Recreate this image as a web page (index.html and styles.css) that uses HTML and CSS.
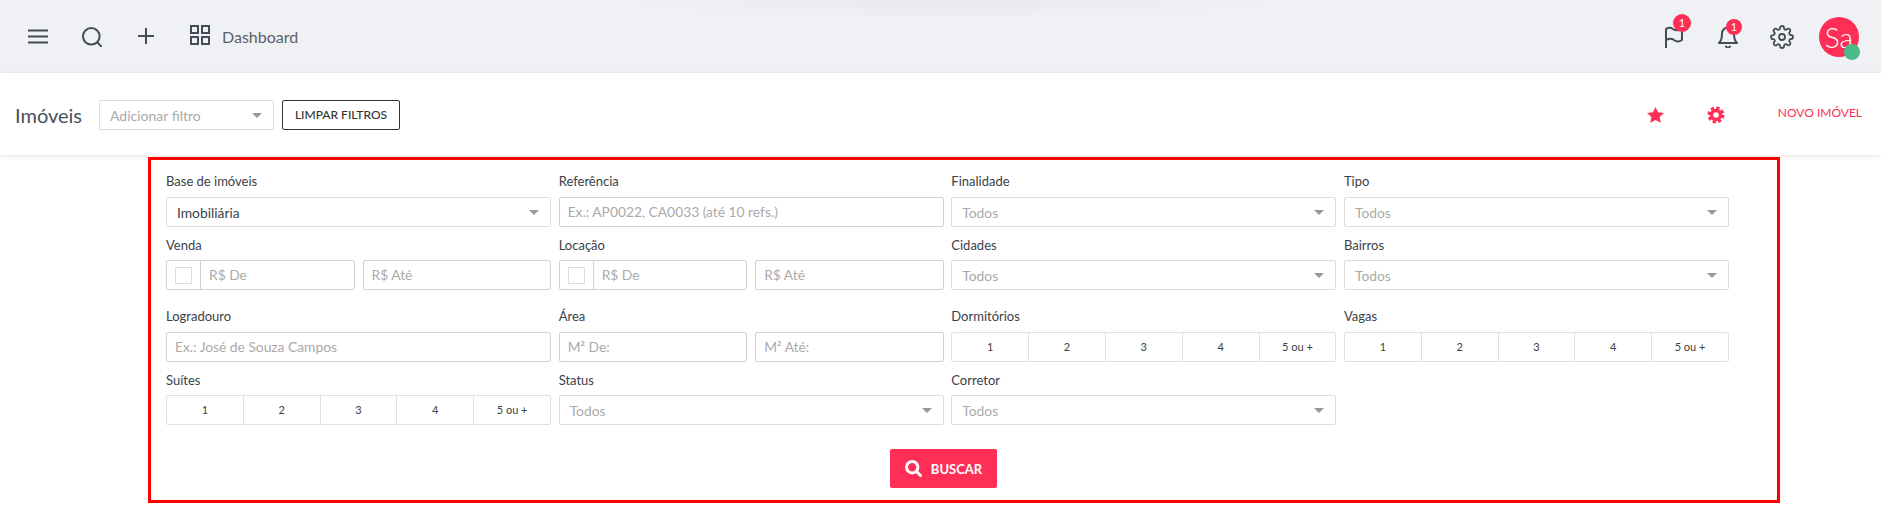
FILE: index.html
```html
<!DOCTYPE html>
<html lang="pt-BR">
<head>
<meta charset="utf-8">
<title>Imóveis</title>
<link rel="stylesheet" href="styles.css">
</head>
<body>
<header class="topbar">
  <svg class="ic ic-menu" viewBox="0 0 20 15"><path d="M0 1.5h20M0 7.5h20M0 13.5h20"/></svg>
  <svg class="ic ic-search" viewBox="0 0 20 20"><circle cx="9.3" cy="9.3" r="8.3"/><path d="M15.4 15.4 19.4 19.6"/></svg>
  <svg class="ic ic-plus" viewBox="0 0 16 16"><path d="M8 0v16M0 8h16"/></svg>
  <svg class="ic ic-grid" viewBox="0 0 20 20"><rect x="1" y="1" width="7" height="7"/><rect x="12" y="1" width="7" height="7"/><rect x="1" y="12" width="7" height="7"/><rect x="12" y="12" width="7" height="7"/></svg>
  <span class="crumb">Dashboard</span>
  <div class="top-right">
    <div class="notif notif-flag">
      <svg class="ic ic-flag" viewBox="0 0 18 22"><path d="M1 22V3c3-2 5-1.500 7 0s5 2 9 0v11c-3 2-6 1.500-8 0s-5-1.500-8 0"/></svg>
      <span class="badge badge-lg">1</span>
    </div>
    <div class="notif notif-bell">
      <svg class="ic ic-bell" viewBox="0 0 20 22"><path d="M16 7.500a6 6 0 0 0-12 0c0 7-3 9.500-3 9.500h18s-3-2.500-3-9.500M8 20.500a2.300 2.300 0 0 0 4 0"/></svg>
      <span class="badge badge-sm">1</span>
    </div>
    <svg class="ic ic-gear" viewBox="0 0 24 24"><circle cx="12" cy="12" r="3"/><path d="M19.400 15a1.650 1.650 0 0 0 .33 1.820l.06.06a2 2 0 1 1-2.830 2.830l-.06-.06a1.650 1.650 0 0 0-1.820-.33 1.650 1.650 0 0 0-1 1.510V21a2 2 0 1 1-4 0v-.09A1.650 1.650 0 0 0 9 19.400a1.650 1.650 0 0 0-1.820.33l-.06.06a2 2 0 1 1-2.830-2.830l.06-.06a1.650 1.650 0 0 0 .33-1.820 1.650 1.650 0 0 0-1.510-1H3a2 2 0 1 1 0-4h.09A1.650 1.650 0 0 0 4.600 9a1.650 1.650 0 0 0-.33-1.820l-.06-.06a2 2 0 1 1 2.830-2.830l.06.06a1.650 1.650 0 0 0 1.820.33H9a1.650 1.650 0 0 0 1-1.510V3a2 2 0 1 1 4 0v.09a1.650 1.650 0 0 0 1 1.510 1.650 1.650 0 0 0 1.820-.33l.06-.06a2 2 0 1 1 2.830 2.830l-.06.06a1.650 1.650 0 0 0-.33 1.820V9a1.650 1.650 0 0 0 1.510 1H21a2 2 0 1 1 0 4h-.09a1.650 1.650 0 0 0-1.510 1z"/></svg>
    <div class="avatar">Sa<span class="online"></span></div>
  </div>
</header>

<section class="subbar">
  <h1 class="title">Imóveis</h1>
  <div class="select select-filter"><span class="muted">Adicionar filtro</span></div>
  <button class="btn-outline" type="button">LIMPAR FILTROS</button>
  <div class="sub-right">
    <svg class="ic-star" viewBox="0 0 18 17"><path d="M9 0l2.700 5.600 6.300.8-4.600 4.300 1.200 6.100L9 13.800l-5.600 3 1.200-6.100L0 6.400l6.300-.8z"/></svg>
    <svg class="ic-cog" viewBox="0 0 18 18"><circle class="cog-teeth" cx="9" cy="9" r="7"/><circle class="cog-ring" cx="9" cy="9" r="4.500"/></svg>
    <a class="new-link" href="#">NOVO IMÓVEL</a>
  </div>
</section>

<form class="panel">
  <div class="row">
    <div class="field"><label>Base de imóveis</label><div class="select"><span>Imobiliária</span></div></div>
    <div class="field"><label>Referência</label><input class="input" placeholder="Ex.: AP0022, CA0033 (até 10 refs.)"></div>
    <div class="field"><label>Finalidade</label><div class="select"><span class="muted">Todos</span></div></div>
    <div class="field"><label>Tipo</label><div class="select"><span class="muted">Todos</span></div></div>
  </div>
  <div class="row row-low">
    <div class="field"><label>Venda</label>
      <div class="pair">
        <div class="addon-input"><span class="addon"><i class="check"></i></span><input class="input input-bare" placeholder="R$ De"></div>
        <input class="input" placeholder="R$ Até">
      </div>
    </div>
    <div class="field"><label>Locação</label>
      <div class="pair">
        <div class="addon-input"><span class="addon"><i class="check"></i></span><input class="input input-bare" placeholder="R$ De"></div>
        <input class="input" placeholder="R$ Até">
      </div>
    </div>
    <div class="field"><label>Cidades</label><div class="select"><span class="muted">Todos</span></div></div>
    <div class="field"><label>Bairros</label><div class="select"><span class="muted">Todos</span></div></div>
  </div>
  <div class="row row-wide">
    <div class="field"><label>Logradouro</label><input class="input" placeholder="Ex.: José de Souza Campos"></div>
    <div class="field"><label>Área</label>
      <div class="pair"><input class="input" placeholder="M² De:"><input class="input" placeholder="M² Até:"></div>
    </div>
    <div class="field"><label>Dormitórios</label>
      <div class="choices"><span>1</span><span>2</span><span>3</span><span>4</span><span>5 ou +</span></div>
    </div>
    <div class="field"><label>Vagas</label>
      <div class="choices"><span>1</span><span>2</span><span>3</span><span>4</span><span>5 ou +</span></div>
    </div>
  </div>
  <div class="row row-low">
    <div class="field"><label>Suítes</label>
      <div class="choices"><span>1</span><span>2</span><span>3</span><span>4</span><span>5 ou +</span></div>
    </div>
    <div class="field"><label>Status</label><div class="select"><span class="muted">Todos</span></div></div>
    <div class="field"><label>Corretor</label><div class="select"><span class="muted">Todos</span></div></div>
  </div>
  <div class="actions">
    <button class="btn-primary" type="button">
      <svg class="ic-find" viewBox="0 0 17 17"><circle cx="7.200" cy="7.200" r="5.700"/><path d="M11.500 11.500 15.500 15.500"/></svg>
      BUSCAR
    </button>
  </div>
</form>
</body>
</html>
```

FILE: styles.css
```css
* { box-sizing: border-box; }

html, body {
  margin: 0;
  padding: 0;
  background: #fff;
}

body {
  font-family: Lato, "Noto Sans", sans-serif;
  color: #343a40;
  height: 512px;
  overflow: hidden;
}

/* top bar */
.topbar {
  display: flex;
  align-items: center;
  height: 73px;
  padding: 0 22px 0 28px;
  background-color: #f0f1f5;
  background-image: radial-gradient(ellipse 340px 20px at 950px 0, #e8e9ed, rgba(232, 233, 237, 0));
}

.ic {
  display: block;
  flex: none;
  fill: none;
  stroke: #464c56;
  stroke-width: 2;
  stroke-linecap: round;
  stroke-linejoin: round;
}

.ic-menu { width: 20px; height: 15px; }
.ic-search { width: 20px; height: 20px; margin-left: 34px; }
.ic-plus { width: 16px; height: 16px; margin-left: 36px; margin-top: -2px; }
.ic-grid { width: 20px; height: 20px; margin-left: 36px; margin-top: -3px; stroke-linecap: butt; stroke-linejoin: miter; }

.crumb {
  margin-left: 12px;
  font-size: 16px;
  color: #5a606a;
}

.top-right {
  display: flex;
  align-items: center;
  margin-left: auto;
}

.notif { position: relative; }

.ic-flag { width: 18px; height: 22px; }
.ic-bell { width: 20px; height: 22px; }

.notif-bell { margin-left: 35px; }

.ic-gear { width: 24px; height: 24px; margin-left: 32px; stroke-width: 1.800; }

.badge {
  position: absolute;
  display: flex;
  align-items: center;
  justify-content: center;
  border-radius: 50%;
  background: #fe2e57;
  color: #fff;
}

.badge-lg { width: 18px; height: 18px; top: -12px; left: 8px; font-size: 11px; }
.badge-sm { width: 16px; height: 16px; top: -7px; left: 8px; font-size: 11px; }

.avatar {
  position: relative;
  width: 40px;
  height: 40px;
  margin-left: 25px;
  border-radius: 50%;
  background: #fe2e57;
  color: #fff;
  font-size: 28px;
  font-weight: 300;
  line-height: 40px;
  text-align: center;
}

.online {
  position: absolute;
  right: -1px;
  bottom: -3px;
  width: 16px;
  height: 16px;
  border-radius: 50%;
  background: #48bb88;
}

/* sub bar */
.subbar {
  display: flex;
  align-items: center;
  height: 82px;
  padding: 1px 19px 0 15px;
  background: #fff;
  box-shadow: 0 1px 4px rgba(0, 0, 0, 0.12);
}

.title {
  width: 84px;
  margin: 0;
  font-size: 20px;
  font-weight: 400;
  color: #48515b;
}

.select {
  position: relative;
  display: flex;
  align-items: center;
  height: 30px;
  padding: 1px 24px 0 10px;
  border: 1px solid #dcdcdc;
  border-radius: 2px;
  background: #fff;
  font-size: 14px;
  color: #3b4148;
}

.select::after {
  content: "";
  position: absolute;
  top: 12px;
  right: 11px;
  border-style: solid;
  border-width: 5px 5px 0;
  border-color: #999 transparent transparent;
}

.muted { color: #aaa; }

.select-filter { width: 175px; }

.btn-outline {
  width: 118px;
  height: 30px;
  margin-left: 8px;
  padding: 0;
  border: 1px solid #333;
  border-radius: 2px;
  background: #fff;
  color: #333;
  font-family: inherit;
  font-size: 12px;
  font-weight: 500;
}

.sub-right {
  display: flex;
  align-items: center;
  margin-left: auto;
}

.ic-star { display: block; width: 17px; height: 16px; fill: #fe2e57; }

.ic-cog { display: block; width: 18px; height: 18px; margin-left: 43px; fill: none; stroke: #fe2e57; }
.cog-teeth { stroke-width: 3; stroke-dasharray: 3.300 2.200; }
.cog-ring { stroke-width: 3.400; }

.new-link {
  margin-left: 53px;
  margin-top: -4px;
  color: #fe2e57;
  font-size: 12px;
  font-weight: 400;
  text-decoration: none;
}

/* search panel */
.panel {
  width: 1632px;
  height: 346px;
  margin: 2px 0 0 148px;
  padding: 11px 48px 0 15px;
  border: 3px solid #f00;
}

.row {
  display: grid;
  grid-template-columns: repeat(4, 385px);
  column-gap: 7.670px;
  margin-top: 7px;
}

.row:first-child { margin-top: 0; }
.row-wide { margin-top: 16px; }
.row-low { margin-top: 8px; }
.row-low .field label { margin-bottom: 5px; }

.field { min-width: 0; }

.field label {
  display: block;
  height: 20px;
  margin-bottom: 6px;
  font-size: 13px;
  line-height: 20px;
  color: #3b4148;
}

.field .select { font-size: 13.800px; }

.input {
  display: block;
  width: 100%;
  min-width: 0;
  height: 30px;
  padding: 0 8px 1px;
  border: 1px solid #cdd3dc;
  border-radius: 2px;
  outline: none;
  background: #fff;
  font-family: inherit;
  font-size: 13.800px;
  color: #3b4148;
}

.input::placeholder { color: #aaa; opacity: 1; }

.pair {
  display: grid;
  grid-template-columns: 1fr 1fr;
  column-gap: 8px;
}

.addon-input {
  display: flex;
  height: 30px;
  border: 1px solid #cdd3dc;
  border-radius: 2px;
}

.addon {
  display: flex;
  flex: none;
  align-items: center;
  justify-content: center;
  width: 34px;
  border-right: 1px solid #cdd3dc;
}

.check {
  display: block;
  width: 17px;
  height: 17px;
  border: 1px solid #dcdcdc;
}

.input-bare {
  flex: 1;
  height: 28px;
  border: 0;
}

.choices {
  display: flex;
  height: 30px;
  border: 1px solid #dfdfdf;
  border-radius: 2px;
}

.choices span {
  display: flex;
  flex: 1;
  align-items: center;
  justify-content: center;
  padding-bottom: 1px;
  font-size: 11px;
  color: #3b4148;
}

.choices span + span { border-left: 1px solid #dfdfdf; }

.actions {
  display: flex;
  justify-content: center;
  width: 1555px;
  margin-top: 24px;
}

.btn-primary {
  display: flex;
  align-items: center;
  justify-content: center;
  gap: 9px;
  width: 107px;
  height: 39px;
  padding: 0;
  border: 0;
  border-radius: 2px;
  background: #fe2e57;
  color: #fff;
  font-family: inherit;
  font-size: 13px;
  font-weight: 700;
}

.ic-find {
  display: block;
  width: 17px;
  height: 17px;
  fill: none;
  stroke: #fff;
  stroke-width: 3;
  stroke-linecap: round;
}
```
